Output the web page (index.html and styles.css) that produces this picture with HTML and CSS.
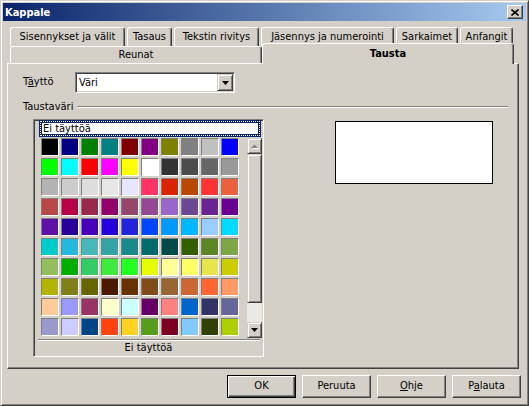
FILE: index.html
```html
<!DOCTYPE html>
<html>
<head>
<meta charset="utf-8">
<link rel="stylesheet" href="styles.css">
</head>
<body>
<div class="window">
  <div class="titlebar">
    <span class="title">Kappale</span>
    <div class="close"><svg width="8" height="7" viewBox="0 0 8 7"><path d="M0.5 0.5 L7.5 6.5 M7.5 0.5 L0.5 6.5" stroke="#000" stroke-width="1.6" fill="none"/></svg></div>
  </div>
  <div class="main">
    <div class="tabrow tabrow1">
      <div class="tab t1">Sisennykset ja välit</div>
      <div class="tab t2">Tasaus</div>
      <div class="tab t3">Tekstin rivitys</div>
      <div class="tab t4">Jäsennys ja numerointi</div>
      <div class="tab t5">Sarkaimet</div>
      <div class="tab t6">Anfangit</div>
    </div>
    <div class="tabrow tabrow2">
      <div class="tab reunat">Reunat</div>
      <div class="tab tausta">Tausta</div>
    </div>
    <div class="panel">
      <div class="fillrow">
        <span class="fill-label">T<u>ä</u>yttö</span>
        <div class="combo">
          <span class="combo-text">Väri</span>
          <div class="combo-btn"><svg width="7" height="4" viewBox="0 0 7 4"><path d="M0 0 H7 L3.5 4 Z" fill="#000"/></svg></div>
        </div>
      </div>
      <div class="group-head">
        <span>Taustaväri</span>
        <div class="group-line"></div>
      </div>
      <div class="content">
        <div class="colorframe">
          <div class="none-item">Ei täyttöä</div>
          <div class="gridrow">
            <div class="swatches">
              <div class="sw" style="background:#000000"></div><div class="sw" style="background:#000080"></div><div class="sw" style="background:#008000"></div><div class="sw" style="background:#008080"></div><div class="sw" style="background:#800000"></div><div class="sw" style="background:#800080"></div><div class="sw" style="background:#808000"></div><div class="sw" style="background:#808080"></div><div class="sw" style="background:#c0c0c0"></div><div class="sw" style="background:#0000ff"></div>
              <div class="sw" style="background:#00ff00"></div><div class="sw" style="background:#00ffff"></div><div class="sw" style="background:#ff0000"></div><div class="sw" style="background:#ff00ff"></div><div class="sw" style="background:#ffff00"></div><div class="sw" style="background:#ffffff"></div><div class="sw" style="background:#333333"></div><div class="sw" style="background:#4c4c4c"></div><div class="sw" style="background:#666666"></div><div class="sw" style="background:#999999"></div>
              <div class="sw" style="background:#b3b3b3"></div><div class="sw" style="background:#cccccc"></div><div class="sw" style="background:#dddddd"></div><div class="sw" style="background:#e6e6e6"></div><div class="sw" style="background:#e6e6ff"></div><div class="sw" style="background:#ff3366"></div><div class="sw" style="background:#dc2300"></div><div class="sw" style="background:#b84700"></div><div class="sw" style="background:#ff3333"></div><div class="sw" style="background:#eb613d"></div>
              <div class="sw" style="background:#b84747"></div><div class="sw" style="background:#b80047"></div><div class="sw" style="background:#99284c"></div><div class="sw" style="background:#94006b"></div><div class="sw" style="background:#94476b"></div><div class="sw" style="background:#944794"></div><div class="sw" style="background:#9966cc"></div><div class="sw" style="background:#6b4794"></div><div class="sw" style="background:#6b2394"></div><div class="sw" style="background:#6b0094"></div>
              <div class="sw" style="background:#5e11a6"></div><div class="sw" style="background:#280099"></div><div class="sw" style="background:#4700b8"></div><div class="sw" style="background:#2300dc"></div><div class="sw" style="background:#2323dc"></div><div class="sw" style="background:#0047ff"></div><div class="sw" style="background:#0099ff"></div><div class="sw" style="background:#00b8ff"></div><div class="sw" style="background:#99ccff"></div><div class="sw" style="background:#00dcff"></div>
              <div class="sw" style="background:#00cccc"></div><div class="sw" style="background:#23b8dc"></div><div class="sw" style="background:#47b8b8"></div><div class="sw" style="background:#33a3a3"></div><div class="sw" style="background:#198a8a"></div><div class="sw" style="background:#006b6b"></div><div class="sw" style="background:#004a4a"></div><div class="sw" style="background:#355e00"></div><div class="sw" style="background:#5c8526"></div><div class="sw" style="background:#7da647"></div>
              <div class="sw" style="background:#94bd5e"></div><div class="sw" style="background:#00ae00"></div><div class="sw" style="background:#33cc66"></div><div class="sw" style="background:#3deb3d"></div><div class="sw" style="background:#23ff23"></div><div class="sw" style="background:#e6ff00"></div><div class="sw" style="background:#ffff99"></div><div class="sw" style="background:#ffff66"></div><div class="sw" style="background:#e6e64c"></div><div class="sw" style="background:#cccc00"></div>
              <div class="sw" style="background:#b3b300"></div><div class="sw" style="background:#808019"></div><div class="sw" style="background:#666600"></div><div class="sw" style="background:#4c1900"></div><div class="sw" style="background:#663300"></div><div class="sw" style="background:#804c19"></div><div class="sw" style="background:#996633"></div><div class="sw" style="background:#cc6633"></div><div class="sw" style="background:#ff6633"></div><div class="sw" style="background:#ff9966"></div>
              <div class="sw" style="background:#ffcc99"></div><div class="sw" style="background:#9999ff"></div><div class="sw" style="background:#993366"></div><div class="sw" style="background:#ffffcc"></div><div class="sw" style="background:#ccffff"></div><div class="sw" style="background:#660066"></div><div class="sw" style="background:#ff8080"></div><div class="sw" style="background:#0066cc"></div><div class="sw" style="background:#333366"></div><div class="sw" style="background:#666699"></div>
              <div class="sw" style="background:#9999cc"></div><div class="sw" style="background:#ccccff"></div><div class="sw" style="background:#004586"></div><div class="sw" style="background:#ff420e"></div><div class="sw" style="background:#ffd320"></div><div class="sw" style="background:#579d1c"></div><div class="sw" style="background:#7e0021"></div><div class="sw" style="background:#83caff"></div><div class="sw" style="background:#314004"></div><div class="sw" style="background:#aecf00"></div>
            </div>
            <div class="scrollbar">
              <div class="sb-btn"><svg width="8" height="5" viewBox="0 0 8 5"><path d="M1 5 H8 L4.5 1.5 Z" fill="#fff"/><path d="M0 4 H7 L3.5 0.5 Z" fill="#808080"/></svg></div>
              <div class="sb-thumb"></div>
              <div class="sb-track"></div>
              <div class="sb-btn"><svg width="7" height="4" viewBox="0 0 7 4"><path d="M0 0 H7 L3.5 4 Z" fill="#000"/></svg></div>
            </div>
          </div>
          <div class="separator"></div>
          <div class="none-bottom">Ei täyttöä</div>
        </div>
        <div class="preview"></div>
      </div>
    </div>
  </div>
  <div class="buttons">
    <div class="btn default">OK</div>
    <div class="btn">Peruuta</div>
    <div class="btn"><u>O</u>hje</div>
    <div class="btn">P<u>a</u>lauta</div>
  </div>
</div>
</body>
</html>
```

FILE: styles.css
```css
* { box-sizing: border-box; }
html, body { margin: 0; padding: 0; }
body {
  background: #d4d0c8;
  font-family: "DejaVu Sans Condensed", "DejaVu Sans", sans-serif;
  font-size: 11px;
  color: #000;
  width: 529px;
  height: 406px;
  overflow: hidden;
}
.window {
  width: 529px;
  height: 406px;
  border: 1px solid;
  border-color: #d4d0c8 #404040 #404040 #d4d0c8;
  box-shadow: inset 1px 1px #fff, inset -1px -1px #808080;
  padding: 2px;
  display: flex;
  flex-direction: column;
}
.titlebar {
  height: 18px;
  flex: none;
  background: linear-gradient(to right, #0a246a, #a6caf0);
  display: flex;
  align-items: center;
  justify-content: space-between;
  padding: 0 3px 0 2px;
}
.title { color: #fff; font-weight: bold; font-size: 11px; }
.close {
  width: 16px;
  height: 14px;
  background: #d4d0c8;
  border: 1px solid;
  border-color: #fff #404040 #404040 #fff;
  box-shadow: inset -1px -1px #808080;
  display: flex;
  align-items: center;
  justify-content: center;
  padding-right: 1px;
}
.main { padding: 6px 0 0 4px; }
.tabrow { display: flex; margin-left: 3px; }
.tabrow1 { height: 19px; gap: 2px; }
.tabrow2 { height: 17px; }
.tab {
  border-top: 1px solid #fff;
  border-left: 1px solid #fff;
  border-right: 1px solid #404040;
  box-shadow: inset -1px 0 #808080;
  border-radius: 3px 3px 0 0;
  text-align: center;
  background: #d4d0c8;
  white-space: nowrap;
}
.tabrow1 .tab { height: 19px; line-height: 17px; }
.t1 { width: 115px; }
.t2 { width: 45px; }
.t3 { width: 85px; }
.t4 { width: 133px; }
.t5 { width: 62px; }
.t6 { width: 53px; }
.reunat { width: 252px; height: 17px; line-height: 15px; }
.tausta {
  width: 252px;
  height: 21px;
  margin-top: -3px;
  line-height: 19px;
  font-weight: bold;
  position: relative;
  z-index: 1;
}
.panel {
  width: 512px;
  height: 306px;
  border: 1px solid;
  border-color: #fff #404040 #404040 #fff;
  box-shadow: inset -1px -1px #808080;
  padding: 8px 0 0 15px;
}
.fillrow { display: flex; align-items: center; height: 21px; }
.fill-label { width: 52px; margin-top: -2px; }
.combo {
  width: 160px;
  height: 21px;
  border: 1px solid;
  border-color: #808080 #fff #fff #808080;
  box-shadow: inset 1px 1px #404040, inset -1px -1px #d4d0c8;
  background: #fff;
  padding: 1px;
  display: flex;
  align-items: center;
}
.combo-text { flex: 1; padding-left: 2px; }
.combo-btn {
  width: 16px;
  height: 17px;
  background: #d4d0c8;
  border: 1px solid;
  border-color: #d4d0c8 #404040 #404040 #d4d0c8;
  box-shadow: inset 1px 1px #fff, inset -1px -1px #808080;
  display: flex;
  align-items: center;
  justify-content: center;
}
.group-head {
  display: flex;
  align-items: center;
  height: 13px;
  margin-top: 7px;
  padding-right: 10px;
}
.group-line {
  flex: 1;
  height: 2px;
  margin-left: 4px;
  border-top: 1px solid #808080;
  border-bottom: 1px solid #fff;
}
.content { display: flex; align-items: flex-start; margin-top: 6px; margin-left: 10px; }
.colorframe {
  width: 231px;
  height: 238px;
  border: 1px solid;
  border-color: #808080 #fff #fff #808080;
  box-shadow: inset 1px 1px #404040, inset -1px -1px #d4d0c8;
  padding: 1px;
}
.none-item {
  margin: -1px 0 0 4px;
  width: 222px;
  height: 17px;
  border: 3px solid #0a246a;
  outline: 1px dotted #fff;
  outline-offset: -2px;
  background: #fff;
  line-height: 11px;
  padding-left: 1px;
}
.gridrow { display: flex; margin-top: 1px; padding-left: 6px; gap: 8px; }
.swatches {
  display: grid;
  grid-template-columns: repeat(10, 18px);
  grid-auto-rows: 18px;
  gap: 2px;
  width: 198px;
}
.sw {
  border: 1px solid;
  border-color: #808080 #fff #fff #808080;
}
.scrollbar { width: 15px; height: 200px; display: flex; flex-direction: column; }
.sb-btn, .sb-thumb {
  background: #d4d0c8;
  border: 1px solid;
  border-color: #d4d0c8 #404040 #404040 #d4d0c8;
  box-shadow: inset 1px 1px #fff, inset -1px -1px #808080;
}
.sb-btn { height: 16px; display: flex; align-items: center; justify-content: center; }
.sb-thumb { height: 149px; }
.sb-track { height: 19px; background: #ebe9e5; }
.separator {
  margin: 1px 2px 0 3px;
  height: 2px;
  border-top: 1px solid #808080;
  border-bottom: 1px solid #fff;
}
.none-bottom { height: 14px; line-height: 14px; text-align: center; }
.preview {
  margin: 2px 0 0 71px;
  width: 158px;
  height: 63px;
  background: #fff;
  border: 1px solid #000;
}
.buttons {
  display: flex;
  justify-content: flex-end;
  gap: 6px;
  margin-top: 6px;
  padding-right: 5px;
}
.btn {
  width: 69px;
  height: 23px;
  border: 1px solid;
  border-color: #fff #404040 #404040 #fff;
  box-shadow: inset -1px -1px #808080;
  text-align: center;
  line-height: 20px;
}
.btn.default {
  border-color: #000;
  box-shadow: inset 1px 1px #fff, inset -1px -1px #404040, inset -2px -2px #808080;
}
```
